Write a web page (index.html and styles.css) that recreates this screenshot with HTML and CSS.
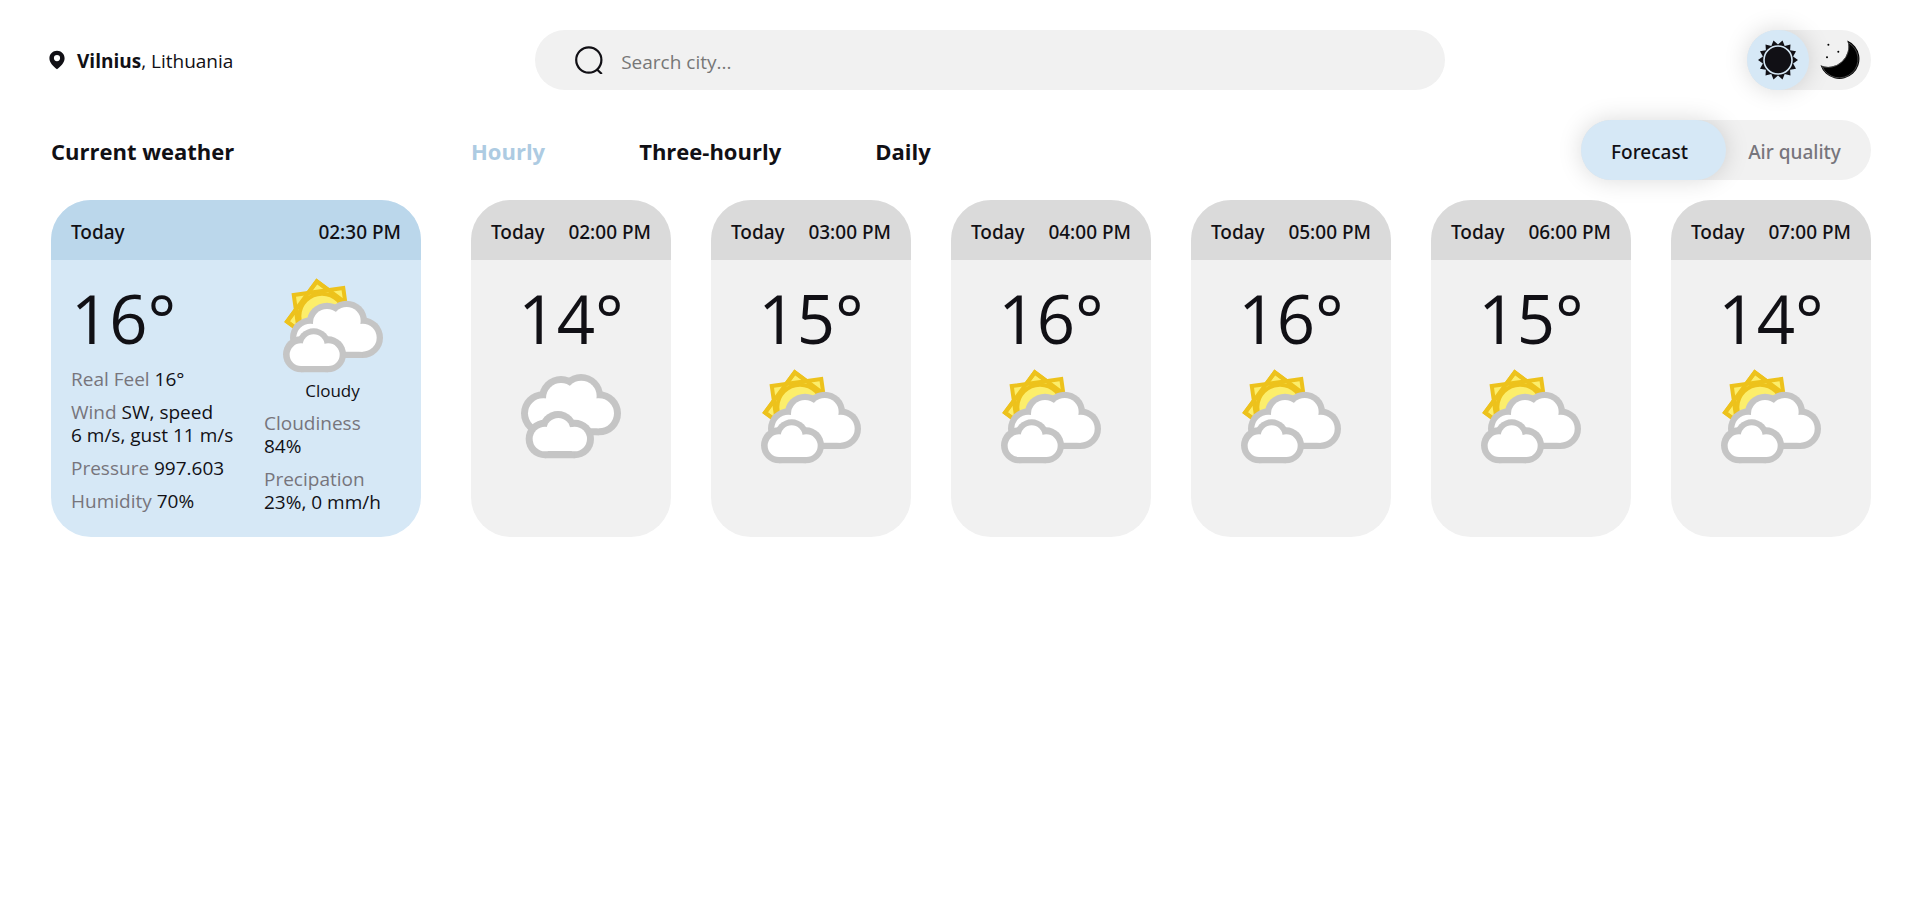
FILE: index.html
```html
<!DOCTYPE html>
<html lang="en">
<head>
<meta charset="utf-8">
<meta name="viewport" content="width=device-width, initial-scale=1">
<title>Weather in Vilnius</title>
<link rel="stylesheet" href="styles.css">
</head>
<body>
<svg class="sprite" aria-hidden="true">
  <symbol id="sun-cloud" viewBox="33 17 300 300">
    <g fill="#fcee6b" stroke="#edc21c" stroke-width="12">
      <rect x="75" y="66" width="150" height="150" transform="rotate(36.5 150 141)"/>
      <rect x="75" y="66" width="150" height="150" transform="rotate(-8 150 141)"/>
      <rect x="75" y="66" width="150" height="150" fill="none" transform="rotate(36.5 150 141)"/>
      <circle cx="150" cy="141" r="68"/>
    </g>
    <g fill="#c5c5c5">
      <circle cx="115" cy="205" r="61"/><circle cx="165" cy="161" r="61"/>
      <circle cx="224" cy="155" r="61"/><circle cx="272" cy="205" r="61"/>
      <path d="M115 180h157v86H115z"/>
    </g>
    <g fill="#fff">
      <circle cx="115" cy="205" r="42"/><circle cx="165" cy="161" r="42"/>
      <circle cx="224" cy="155" r="42"/><circle cx="272" cy="205" r="42"/>
      <path d="M115 165h157v82H115z"/>
    </g>
    <g fill="#c5c5c5">
      <circle cx="87" cy="255" r="54"/><circle cx="125" cy="228" r="51"/><circle cx="168" cy="255" r="54"/>
      <path d="M87 250h81v59H87z"/>
    </g>
    <g fill="#fff">
      <circle cx="87" cy="256" r="34"/><circle cx="125" cy="228" r="33"/><circle cx="169" cy="256" r="34"/>
      <path d="M87 224h82v66H87z"/>
    </g>
  </symbol>
  <symbol id="clouds" viewBox="33 18 300 300">
    <g fill="#c5c5c5">
      <circle cx="99" cy="160" r="66"/><circle cx="153" cy="114" r="66"/>
      <circle cx="213" cy="108" r="66"/><circle cx="267" cy="160" r="66"/>
      <path d="M99 140h168v86H99z"/>
    </g>
    <g fill="#fff">
      <circle cx="99" cy="160" r="45"/><circle cx="153" cy="114" r="45"/>
      <circle cx="214" cy="108" r="46"/><circle cx="267" cy="160" r="45"/>
      <path d="M99 116h168v89H99z"/>
    </g>
    <g fill="#c5c5c5">
      <circle cx="105" cy="237" r="58"/><circle cx="144" cy="209" r="56"/><circle cx="194" cy="237" r="58"/>
      <path d="M105 230h89v65h-89z"/>
    </g>
    <g fill="#fff">
      <circle cx="105" cy="237" r="37"/><circle cx="145" cy="210" r="36"/><circle cx="194" cy="237" r="37"/>
      <path d="M105 202h89v71h-89z"/>
    </g>
  </symbol>
</svg>

<div class="page">
  <header class="topbar">
    <p class="location">
      <svg class="location-pin" viewBox="0 0 16 20" aria-hidden="true"><path fill="#111015" fill-rule="evenodd" d="M8 .7C3.800.7.4 4 .4 8.200c0 4.600 4.100 8.200 7.600 11.100 3.500-2.900 7.600-6.500 7.600-11.100C15.600 4 12.200.7 8 .7zM8 5a3.100 3.100 0 1 1 0 6.200A3.100 3.100 0 0 1 8 5z"/></svg>
      <span><b>Vilnius</b>, Lithuania</span>
    </p>
    <form class="search" role="search">
      <svg class="search-icon" viewBox="0 0 28 28" aria-hidden="true"><g fill="none" stroke="#111015" stroke-width="2.200"><circle cx="13.800" cy="14" r="12.600"/><path d="M21.500 23l5.300 5"/></g></svg>
      <input class="search-input" type="search" aria-label="Search city" placeholder="Search city...">
    </form>
    <div class="switch">
      <button class="theme-button active" type="button" aria-label="Light theme">
        <svg class="theme-icon" viewBox="-20 -20 40 40" aria-hidden="true">
          <path fill="#111015" d="M20 0 15.100 3.400 18 8.700 12.100 9.700 12.500 15.600 6.700 14 4.500 19.500 0 15.500-4.500 19.500-6.700 14-12.500 15.600-12.100 9.700-18 8.700-15.100 3.400-20 0-15.100-3.400-18-8.700-12.100-9.700-12.500-15.600-6.700-14-4.500-19.500 0-15.500 4.500-19.500 6.700-14 12.500-15.600 12.100-9.700 18-8.700 15.100-3.400z"/>
          <circle r="14" fill="#111015" stroke="#d6e8f6" stroke-width="1.600"/>
        </svg>
      </button>
      <button class="theme-button" type="button" aria-label="Dark theme">
        <svg class="theme-icon" viewBox="0 0 40 40" aria-hidden="true">
          <path d="M27.300.5A20 20 0 1 1 .5 25.300 20 20 0 0 0 27.300.5z"/>
          <path fill="none" stroke="#777" stroke-width=".6" d="M28.500 2.800A18.700 18.700 0 1 1 2.200 26.600 21 21 0 0 0 28.500 2.800z"/>
          <circle cx="8.400" cy="4.800" r="1"/><circle cx="18.300" cy="11.800" r="1"/><circle cx="7" cy="17.300" r="1"/>
        </svg>
      </button>
    </div>
  </header>

  <div class="toolbar">
    <h2 class="title">Current weather</h2>
    <nav class="tabs">
      <a class="tab selected" href="#hourly">Hourly</a>
      <a class="tab" href="#three-hourly">Three-hourly</a>
      <a class="tab" href="#daily">Daily</a>
    </nav>
    <div class="switch">
      <button class="view-button view-forecast active" type="button">Forecast</button>
      <button class="view-button" type="button">Air quality</button>
    </div>
  </div>

  <main class="weather">
    <section class="card card-current">
      <div class="card-head"><span>Today</span><time>02:30 PM</time></div>
      <div class="current-body">
        <div class="details">
          <p class="temp">16°</p>
          <p><span class="label">Real Feel</span> 16°</p>
          <p><span class="label">Wind</span> SW, speed<br>6 m/s, gust 11 m/s</p>
          <p><span class="label">Pressure</span> 997.603</p>
          <p><span class="label">Humidity</span> 70%</p>
        </div>
        <div class="details">
          <figure class="condition">
            <svg class="weather-icon" aria-hidden="true"><use href="#sun-cloud"/></svg>
            <figcaption>Cloudy</figcaption>
          </figure>
          <p><span class="label">Cloudiness</span><br>84%</p>
          <p><span class="label">Precipation</span><br>23%, 0 mm/h</p>
        </div>
      </div>
    </section>
    <section class="hours">
      <article class="card">
        <div class="card-head"><span>Today</span><time>02:00 PM</time></div>
        <div class="hour-body"><p class="temp">14°</p><svg class="weather-icon" role="img" aria-label="Clouds"><use href="#clouds"/></svg></div>
      </article>
      <article class="card">
        <div class="card-head"><span>Today</span><time>03:00 PM</time></div>
        <div class="hour-body"><p class="temp">15°</p><svg class="weather-icon" role="img" aria-label="Cloudy"><use href="#sun-cloud"/></svg></div>
      </article>
      <article class="card">
        <div class="card-head"><span>Today</span><time>04:00 PM</time></div>
        <div class="hour-body"><p class="temp">16°</p><svg class="weather-icon" role="img" aria-label="Cloudy"><use href="#sun-cloud"/></svg></div>
      </article>
      <article class="card">
        <div class="card-head"><span>Today</span><time>05:00 PM</time></div>
        <div class="hour-body"><p class="temp">16°</p><svg class="weather-icon" role="img" aria-label="Cloudy"><use href="#sun-cloud"/></svg></div>
      </article>
      <article class="card">
        <div class="card-head"><span>Today</span><time>06:00 PM</time></div>
        <div class="hour-body"><p class="temp">15°</p><svg class="weather-icon" role="img" aria-label="Cloudy"><use href="#sun-cloud"/></svg></div>
      </article>
      <article class="card">
        <div class="card-head"><span>Today</span><time>07:00 PM</time></div>
        <div class="hour-body"><p class="temp">14°</p><svg class="weather-icon" role="img" aria-label="Cloudy"><use href="#sun-cloud"/></svg></div>
      </article>
    </section>
  </main>
</div>
</body>
</html>
```
FILE: styles.css
```css
* { box-sizing: border-box; }

body {
  margin: 0;
  background: #fff;
  color: #111015;
  font: 400 19px/23px "Open Sans", "Noto Sans", sans-serif;
}

p, h2, figure { margin: 0; }

button, input { font: inherit; color: inherit; }

.sprite {
  position: absolute;
  width: 0;
  height: 0;
}

.page { margin: 30px 50px 0 51px; }

.topbar {
  display: flex;
  align-items: center;
  justify-content: space-between;
  min-height: 60px;
}

.location {
  display: flex;
  align-items: center;
  gap: 12px;
}

.location span { padding-top: 2px; }

.location-pin {
  width: 16px;
  height: 20px;
  margin-left: -2px;
}

.search {
  display: flex;
  align-items: center;
  gap: 18px;
  width: 50%;
  height: 60px;
  padding: 0 40px;
  border-radius: 30px;
  background: #f1f1f1;
}

.search-icon {
  flex: none;
  width: 28px;
  height: 28px;
}

.search-input {
  flex: 1;
  min-width: 0;
  height: 60px;
  padding: 4px 0 0;
  border: 0;
  outline: 0;
  background: none;
}

.search-input::placeholder { color: #777; }

.switch {
  display: flex;
  border-radius: 30px;
  background: #f1f1f1;
}

.theme-button, .view-button {
  height: 60px;
  border: 0;
  border-radius: 30px;
  background: none;
  cursor: pointer;
}

.theme-button {
  display: flex;
  align-items: center;
  padding: 0 11px;
}

.theme-icon {
  width: 40px;
  height: 40px;
}

.view-button {
  width: 145px;
  padding: 4px 30px 0 22px;
  color: #77757c;
  font-family: "Noto Sans", "Open Sans", sans-serif;
  font-weight: 500;
  white-space: nowrap;
}

.view-forecast { padding: 4px 38px 0 30px; }

.active {
  z-index: 1;
  background: #d6e8f6;
  color: #111015;
  box-shadow: 0 0 25px rgba(0, 0, 0, .15);
}

.toolbar {
  display: flex;
  align-items: center;
  justify-content: space-between;
  margin-top: 30px;
}

.title, .tabs {
  padding-top: 2px;
  font-size: 22px;
  font-weight: 700;
}

.title {
  width: 370px;
  margin-right: 50px;
}

.tabs {
  display: flex;
  flex: 1;
  gap: 94px;
}

.tab {
  color: inherit;
  text-decoration: none;
}

.selected { color: #adcbe2; }

.weather {
  display: grid;
  grid-template-columns: 370px 1fr;
  gap: 50px;
  margin-top: 20px;
}

.hours {
  display: grid;
  grid-template-columns: repeat(6, 1fr);
  gap: 40px;
}

.card {
  overflow: hidden;
  border-radius: 40px;
  background: #f1f1f1;
}

.card-head {
  display: flex;
  align-items: center;
  justify-content: space-between;
  height: 60px;
  padding: 4px 20px 0;
  background: #dadada;
  font-family: "Noto Sans", "Open Sans", sans-serif;
  font-weight: 500;
  white-space: nowrap;
}

.card-current { background: #d6e8f6; }

.card-current .card-head { background: #bbd7eb; }

.current-body {
  display: grid;
  grid-template-columns: 1fr 137px;
  padding: 15px 20px 23px;
  white-space: nowrap;
}

.details {
  display: flex;
  flex-direction: column;
  gap: 10px;
}

.label { color: #77757c; }

.temp {
  font-size: 67px;
  line-height: 88px;
}

.details .temp {
  padding-top: 3px;
  line-height: 80px;
}

.condition {
  display: flex;
  flex-direction: column;
  align-items: center;
  gap: 4px;
  font-size: 17px;
}

.weather-icon {
  width: 100px;
  height: 100px;
}

.hour-body {
  display: flex;
  flex-direction: column;
  align-items: center;
  gap: 4px;
  padding-top: 14px;
}
```
